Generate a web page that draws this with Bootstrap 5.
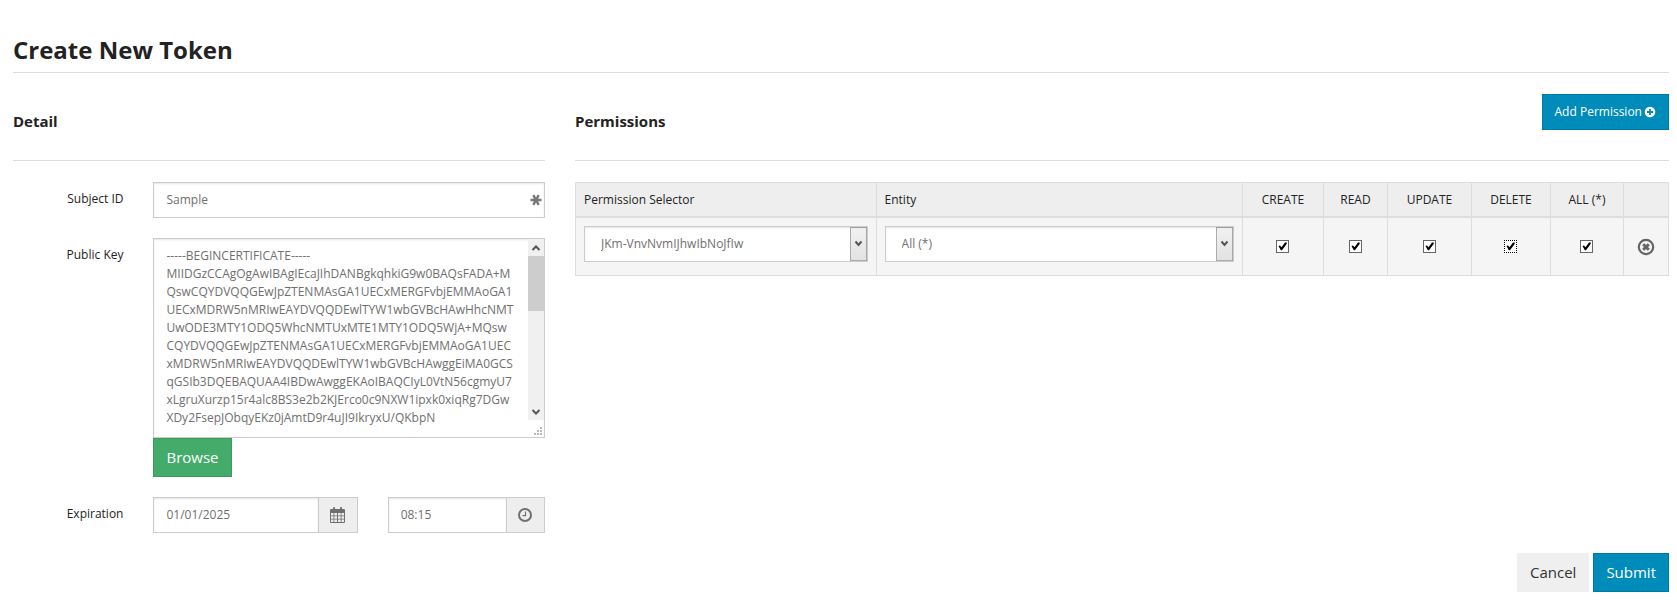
<!DOCTYPE html>
<html lang="en">
<head>
<meta charset="utf-8">
<meta name="viewport" content="width=device-width, initial-scale=1">
<title>Create New Token</title>
<link rel="stylesheet" href="https://cdn.jsdelivr.net/npm/bootstrap@5.3.0/dist/css/bootstrap.min.css">
<style>
  body { font-family: "Open Sans", sans-serif; font-size: 15px; line-height: 21px; color: #222; background: #fff; }
  .page { padding: 32px 8px 8px 13px; }
  .page .row { --bs-gutter-x: 30px; }
  .field-row { margin-bottom: 20px; }
  h1 { font-size: 24px; line-height: 36px; font-weight: 700; margin: 0; padding-bottom: 4px; border-bottom: 1px solid #ddd; }
  h2 { font-size: 15px; line-height: 21px; font-weight: 700; margin: 0; }
  .section-head { height: 88px; padding: 21px 0 30px; border-bottom: 1px solid #ddd; margin-bottom: 21px; }
  .section-head h2 { padding-top: 17px; }
  .form-label-right { font-size: 12px; line-height: 18px; text-align: right; padding-top: 8px; display: block; }
  .form-control, .form-select { font-size: 12px; line-height: 18px; padding: 8px 12px; border: 1px solid #ccc; border-radius: 0; color: #6f6f6f; box-shadow: inset 0 1px 2px rgba(0,0,0,.1); min-height: 36px; }
  .form-control:focus, .form-select:focus { box-shadow: none; border-color: #999; color: #6f6f6f; }
  textarea.form-control { height: 200px; padding-right: 18px; resize: none; overflow: hidden; display: block; }
  .required-mark { position: absolute; right: 3px; top: 12px; }
  .scroll-track { position: absolute; right: 1px; top: 1px; width: 16px; height: 181px; background: #f0f0f0; }
  .scroll-grip { position: absolute; right: 3px; bottom: 3px; }
  .input-group-text { width: 40px; justify-content: center; padding: 0; background: #eee; border: 1px solid #ccc; border-radius: 0; color: #6f6f6f; }
  .time-group .input-group-text { width: 39px; }
  .btn { font-size: 15px; line-height: 21px; padding: 8px 12px; border-radius: 0; }
  .btn-small { font-size: 12px; line-height: 18px; gap: 2px; }
  .btn-main, .btn-main:hover { background: #008cba; border-color: #0079a1; color: #fff; }
  .btn-browse, .btn-browse:hover { background: #43ac6a; border-color: #3c9a5f; color: #fff; }
  .btn-plain, .btn-plain:hover { background: #efefef; border-color: #efefef; color: #333; }
  .perm-table { table-layout: fixed; font-size: 12px; line-height: 18px; border-color: #ddd; color: #222; margin: 0; }
  .perm-table th { font-weight: 400; background: #eee; padding: 8px 8px 7px; border-bottom: 2px solid #ddd; color: #222; }
  .perm-table td { background: #f5f5f5; padding: 8px; vertical-align: middle; }
  .perm-table .form-select { padding: 8px 28px 8px 16px; margin-bottom: 5px; background-color: #fff;
    background-image:
      url("data:image/svg+xml,%3Csvg xmlns='http://www.w3.org/2000/svg' width='17' height='34'%3E%3Cdefs%3E%3ClinearGradient id='g' x2='0' y2='1'%3E%3Cstop stop-color='%23f2f2f2'/%3E%3Cstop offset='1' stop-color='%23e2e2e2'/%3E%3C/linearGradient%3E%3C/defs%3E%3Crect x='.5' y='.5' width='16' height='33' fill='url(%23g)' stroke='%23acacac'/%3E%3Cpath d='M5.500 14.500L8.500 18L11.500 14.500' fill='none' stroke='%23555' stroke-width='2'/%3E%3C/svg%3E");
    background-position: right 0 center; background-size: 17px 34px; background-repeat: no-repeat; }
  .tick { appearance: none; display: block; margin: 0 auto; width: 13px; height: 13px; border: 1px solid #666; background: #fff; }
  .tick:checked { background: #fff url("data:image/svg+xml,%3Csvg xmlns='http://www.w3.org/2000/svg' viewBox='0 0 11 11'%3E%3Cpath d='M1.500 5L3 4.500L4.500 6.200L8 1.500L9.800 1.500L9.600 3L5 9.200L3.800 9.200z' fill='%23000'/%3E%3C/svg%3E") center / 11px 11px no-repeat; }
  .tick-focus { border: 1px dotted #000; }
  .icon-btn { background: none; border: 0; padding: 0; display: block; margin: 0 auto; color: #666; }
  svg { display: block; }
</style>
</head>
<body>
<main class="page">
  <h1>Create New Token</h1>
  <form onsubmit="return false">
    <div class="row">
      <section class="col-4">
        <div class="section-head"><h2>Detail</h2></div>
        <div class="row field-row">
          <div class="col-3"><label class="form-label-right" for="subject">Subject ID</label></div>
          <div class="col-9">
            <div class="position-relative">
              <input class="form-control" id="subject" type="text" value="Sample">
              <svg class="required-mark" width="12" height="12" viewBox="0 0 12 12" stroke="#777" stroke-width="2.4" aria-hidden="true"><path d="M.5 6h11M3.300 1.200l5.400 9.600M8.700 1.200l-5.400 9.600"/></svg>
            </div>
          </div>
        </div>
        <div class="row field-row">
          <div class="col-3"><label class="form-label-right" for="pubkey">Public Key</label></div>
          <div class="col-9">
            <div class="position-relative">
              <textarea class="form-control" id="pubkey" spellcheck="false">-----BEGINCERTIFICATE-----
MIIDGzCCAgOgAwIBAgIEcaJIhDANBgkqhkiG9w0BAQsFADA+M
QswCQYDVQQGEwJpZTENMAsGA1UECxMERGFvbjEMMAoGA1
UECxMDRW5nMRIwEAYDVQQDEwlTYW1wbGVBcHAwHhcNMT
UwODE3MTY1ODQ5WhcNMTUxMTE1MTY1ODQ5WjA+MQsw
CQYDVQQGEwJpZTENMAsGA1UECxMERGFvbjEMMAoGA1UEC
xMDRW5nMRIwEAYDVQQDEwlTYW1wbGVBcHAwggEiMA0GCS
qGSIb3DQEBAQUAA4IBDwAwggEKAoIBAQCIyL0VtN56cgmyU7
xLgruXurzp15r4alc8BS3e2b2KJErco0c9NXW1ipxk0xiqRg7DGw
XDy2FsepJObqyEKz0jAmtD9r4uJI9IkryxU/QKbpN</textarea>
              <div class="scroll-track" aria-hidden="true">
                <svg width="16" height="181" viewBox="0 0 16 181" fill="none" stroke="#555" stroke-width="2"><path d="M0 17h16v55H0z" fill="#cdcdcd" stroke="none"/><path d="M4.500 11L8 7.500L11.500 11M4.500 171L8 174.500L11.500 171"/></svg>
              </div>
              <svg class="scroll-grip" width="8" height="8" viewBox="0 0 8 8" fill="#bbb" aria-hidden="true"><path d="M6 0h2v2H6zM6 3h2v2H6zM6 6h2v2H6zM3 3h2v2H3zM3 6h2v2H3zM0 6h2v2H0z"/></svg>
            </div>
            <button type="button" class="btn btn-browse">Browse</button>
          </div>
        </div>
        <div class="row field-row">
          <div class="col-3"><label class="form-label-right" for="exp-date">Expiration</label></div>
          <div class="col-5">
            <div class="input-group flex-nowrap">
              <input class="form-control" id="exp-date" type="text" value="01/01/2025">
              <span class="input-group-text"><svg width="15" height="16" viewBox="0 0 15 16" aria-hidden="true"><path fill="currentColor" fill-rule="evenodd" d="M0 3q0-1 1-1h2V1q0-1 1-1t1 1v1h5V1q0-1 1-1t1 1v1h2q1 0 1 1v12q0 1-1 1H1q-1 0-1-1z"/><path fill="#eee" d="M1 6h2.500v2.500H1zM4.300 6H7v2.500H4.300zM8 6h2.700v2.500H8zM11.500 6H14v2.500h-2.500zM1 9.300h2.500v2.500H1zM4.300 9.300H7v2.500H4.300zM8 9.300h2.700v2.500H8zM11.500 9.300H14v2.500h-2.500zM1 12.600h2.500V15H1zM4.300 12.600H7V15H4.300zM8 12.600h2.700V15H8zM11.500 12.600H14V15h-2.500z"/></svg></span>
            </div>
          </div>
          <div class="col-4">
            <div class="input-group flex-nowrap time-group">
              <input class="form-control" id="exp-time" type="text" value="08:15" aria-label="Expiration time">
              <span class="input-group-text"><svg width="16" height="16" viewBox="0 0 16 16" fill="none" stroke="currentColor" aria-hidden="true"><circle cx="8" cy="8" r="6" stroke-width="2"/><path d="M8.500 4.500v4.200H5.500" stroke-width="1.200"/></svg></span>
            </div>
          </div>
        </div>
      </section>
      <section class="col-8">
        <div class="section-head d-flex justify-content-between">
          <h2>Permissions</h2>
          <button type="button" class="btn btn-main btn-small d-flex align-items-center">Add Permission
            <svg width="12" height="12" viewBox="0 0 12 12" aria-hidden="true"><circle cx="6" cy="6" r="5.300" fill="currentColor"/><path d="M6 3v6M3 6h6" stroke="#008cba" stroke-width="1.800"/></svg>
          </button>
        </div>
        <table class="table table-bordered perm-table">
          <colgroup><col style="width:27.5%"><col><col style="width:81px"><col style="width:64px"><col style="width:84px"><col style="width:79px"><col style="width:73px"><col style="width:45px"></colgroup>
          <thead>
            <tr><th scope="col">Permission Selector</th><th scope="col">Entity</th><th scope="col" class="text-center">CREATE</th><th scope="col" class="text-center">READ</th><th scope="col" class="text-center">UPDATE</th><th scope="col" class="text-center">DELETE</th><th scope="col" class="text-center">ALL (*)</th><th></th></tr>
          </thead>
          <tbody>
            <tr>
              <td><select class="form-select" aria-label="Permission Selector"><option>JKm-VnvNvmIJhwIbNoJfIw</option></select></td>
              <td><select class="form-select" aria-label="Entity"><option>All (*)</option></select></td>
              <td><input type="checkbox" class="tick" checked aria-label="Create"></td>
              <td><input type="checkbox" class="tick" checked aria-label="Read"></td>
              <td><input type="checkbox" class="tick" checked aria-label="Update"></td>
              <td><input type="checkbox" class="tick tick-focus" checked aria-label="Delete"></td>
              <td><input type="checkbox" class="tick" checked aria-label="All"></td>
              <td><button type="button" class="icon-btn" aria-label="Remove permission"><svg width="18" height="18" viewBox="0 0 18 18" fill="none" stroke="currentColor"><circle cx="9" cy="9" r="7.200" stroke-width="2.200"/><path d="M6.200 6.200l5.600 5.600M11.800 6.200l-5.600 5.600" stroke-width="3"/></svg></button></td>
            </tr>
          </tbody>
        </table>
      </section>
    </div>
    <div class="d-flex justify-content-end gap-1">
      <button type="button" class="btn btn-plain">Cancel</button>
      <button type="submit" class="btn btn-main">Submit</button>
    </div>
  </form>
</main>
<script src="https://cdn.jsdelivr.net/npm/bootstrap@5.3.0/dist/js/bootstrap.bundle.min.js"></script>
</body>
</html>
